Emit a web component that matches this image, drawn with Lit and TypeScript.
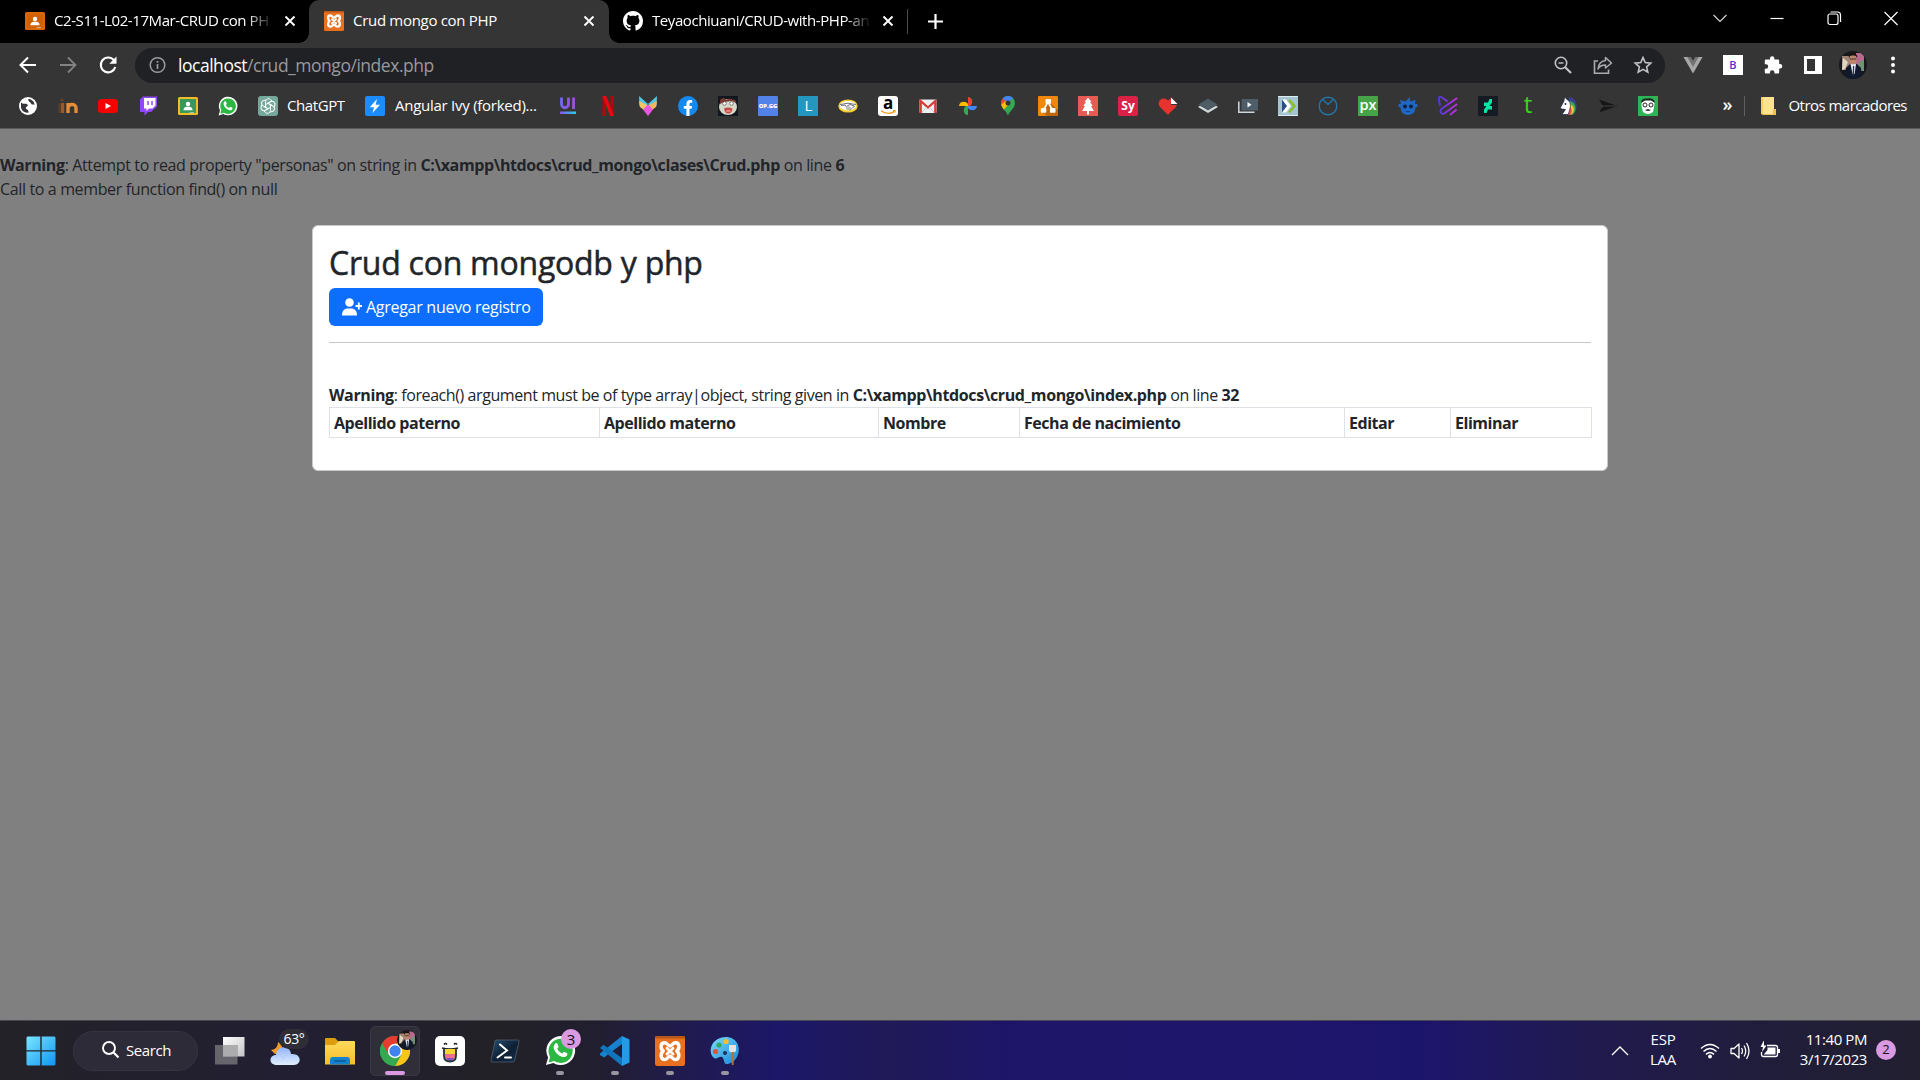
import { LitElement, html, svg, css, TemplateResult, SVGTemplateResult } from "lit";
import { customElement } from "lit/decorators.js";

const icon = (body: SVGTemplateResult, size = 20, box = 20): TemplateResult =>
  html`<svg width=${size} height=${size} viewBox="0 0 ${box} ${box}" fill="none">${body}</svg>`;

/* ---------- shared marks ---------- */
const xamppMark = svg`
  <rect width="20" height="20" rx="1.5" fill="#e9701f"/><rect width="20" height="1.6" rx=".8" fill="#b9581b"/>
  <path d="M6.2 4.5C3.5 4.500 3.500 8.500 5.500 10C3.500 11.500 3.500 15.700 6.500 15.700C8.500 15.700 8.500 13.500 10 13.500C11.500 13.500 11.500 15.700 13.500 15.700C16.500 15.700 16.500 11.500 14.500 10C16.500 8.500 16.500 4.500 13.800 4.500C11.500 4.500 11.700 6.600 10 6.600C8.300 6.600 8.500 4.500 6.200 4.500Z" stroke="#fff" stroke-width="2.300" stroke-linejoin="round"/>
  <path d="M8 8.200L12 12M12 8.200L8 12" stroke="#fff" stroke-width="1.900" stroke-linecap="round"/>`;

const whatsapp = svg`
  <path d="M.6 19.400L2 14.500A9.300 9.300 0 1 1 5.400 18Z" fill="#fff"/>
  <path d="M2.300 17.700L3.300 14.100A7.800 7.800 0 1 1 5.900 16.800Z" fill="#2cb742"/>
  <path d="M6.500 5.600c.5-.5 1.200-.5 1.500.1l.7 1.700c.2.500-.7 1.100-.8 1.500.6 1.400 1.700 2.400 3.100 3 .5 0 .9-1.200 1.400-1.100l1.800.9c.5.300.2 1.200-.2 1.700-.8.900-2 1-3.100.6-2.600-.9-4.500-2.900-5.200-5.200-.3-1.200 0-2.500.8-3.200Z" fill="#fff"/>`;

const portrait = svg`
  <clipPath id="face"><circle cx="14" cy="14" r="14"/></clipPath>
  <g clip-path="url(#face)">
    <rect width="28" height="28" fill="#17181b"/><path d="M3 5H24V19H3Z" fill="#a38372"/>
    <path d="M17 2H25V18H17Z" fill="#b76a8e"/><path d="M4 7L9 11L6 18L3 19Z" fill="#dfd6c4"/>
    <path d="M20 11L25 9V20H18Z" fill="#6f9474"/>
    <path d="M6 28L7 17L11 13H18L22 17L23 28Z" fill="#111a2c"/>
    <path d="M11.500 13H17L15.600 23L13.500 23Z" fill="#e4eaf4"/><path d="M14 15H15.200L15 25H13.600Z" fill="#27324b"/>
    <ellipse cx="14" cy="8.500" rx="3.700" ry="5" fill="#bd856d"/>
    <path d="M9.800 7C9 1 19 .5 18.200 7L16.500 4.500H11.500Z" fill="#17120f"/>
    <path d="M10.700 8H17.300" stroke="#40302b" stroke-width="1.200"/>
  </g>`;

const classroom = (bg: string, edge: string) => svg`
  <rect y="1" width="20" height="18" rx="1.500" fill=${edge}/><rect x="2" y="3" width="16" height="14" fill=${bg}/>
  <circle cx="10" cy="8" r="2.200" fill="#fff"/><path d="M5.500 14.200C5.500 11 8 10.800 10 10.800S14.500 11 14.500 14.200Z" fill="#fff"/>
  <path d="M11.500 16H16V17.200H11.500Z" fill="#ddd" opacity=".6"/>`;

const github = svg`<g transform="scale(1.25)"><path fill="#fff" d="M8 0C3.580 0 0 3.580 0 8c0 3.540 2.290 6.530 5.470 7.590.4.070.55-.17.55-.38 0-.19-.01-.82-.01-1.490-2.010.37-2.530-.49-2.690-.94-.09-.23-.48-.94-.82-1.130-.28-.15-.68-.52-.01-.53.63-.01 1.080.58 1.230.82.72 1.210 1.870.87 2.330.66.070-.52.28-.87.51-1.070-1.780-.2-3.640-.89-3.640-3.950 0-.87.31-1.590.82-2.150-.08-.2-.36-1.020.08-2.120 0 0 .67-.21 2.200.82.64-.18 1.320-.27 2-.27s1.360.09 2 .27c1.530-1.040 2.200-.82 2.200-.82.44 1.100.16 1.920.08 2.120.51.56.82 1.270.82 2.150 0 3.070-1.870 3.750-3.650 3.950.29.25.54.73.54 1.480 0 1.070-.01 1.930-.01 2.200 0 .21.15.46.55.38A8.010 8.010 0 0 0 16 8c0-4.420-3.580-8-8-8"/></g>`;

const closeX = icon(svg`<path d="M1.500 1.500L10.500 10.500M10.500 1.500L1.500 10.500" stroke="#fff" stroke-width="1.900"/>`, 12, 12);

const letter = (t: string, x: number, y: number, size: number, fill: string, weight = 400) =>
  svg`<text x=${x} y=${y} font-family="Open Sans, sans-serif" font-size=${size} font-weight=${weight} fill=${fill} text-anchor="middle">${t}</text>`;

/* ---------- bookmarks ---------- */
type Mark = { art: SVGTemplateResult; label?: string; cls?: string };
const marks: Mark[] = [
  { art: svg`<circle cx="10" cy="10" r="9" fill="#fff"/><path d="M3 6.500C5.500 9 8 6.500 9.500 8.500C11 10.500 7 10.500 8 12.500C8.600 13.700 10.800 13.500 10.500 16.500C7.500 17.500 3.500 15 3 11.500Z" fill="#35363a"/><path d="M10.500 3C9.500 5 12 5.500 13 7.500C14 9.500 16 8 16.600 9C16.300 5.500 13.500 3 10.500 3Z" fill="#35363a"/>` },
  { art: svg`<path d="M4.500 7V17" stroke="#9a5a28" stroke-width="3.400"/><path d="M1.500 7V17" stroke="#55412f" stroke-width="2"/><circle cx="4" cy="4" r="1.500" fill="#6b4628"/><path d="M10 17V7M10 12C10 7.500 18 7 18 12V17" stroke="#e58a35" stroke-width="3.400"/>` },
  { art: svg`<rect y="3" width="20" height="14" rx="3.500" fill="#f60000"/><path d="M7.500 7L13 10L7.500 13Z" fill="#fff"/>` },
  { art: svg`<path d="M2 3.500L5 .5H19V10.500L13 16H10L6.500 19.500V16H2Z" fill="#9146ff"/><path d="M6 2H17.500V9.500L14.500 12.500H11L8.500 15V12.500H6Z" fill="#fff"/><path d="M10 5V9M14 5V9" stroke="#9146ff" stroke-width="1.500"/>` },
  { art: classroom("#39985c", "#f2bd26") },
  { art: whatsapp },
  { label: "ChatGPT", cls: "chat", art: svg`<rect width="20" height="20" rx="3" fill="#75a99c"/><g stroke="#fff" stroke-width="1">${[0, 60, 120, 180, 240, 300].map(a => svg`<path transform="rotate(${a} 10 10)" d="M7.600 8.700V5.200A2.900 2.900 0 0 1 12.700 3.700L14 5M7.600 8.700L11.600 6.300"/>`)}</g>` },
  { label: "Angular Ivy (forked)...", cls: "ivy", art: svg`<rect width="20" height="20" rx="2" fill="#1b8cfb"/><path d="M12 3L4.800 11.300H9L7.500 17L15 8.700H10.700Z" fill="#fff"/>` },
  { art: svg`<defs><linearGradient id="ui" gradientUnits="userSpaceOnUse" x1="2" y1="0" x2="12" y2="0"><stop stop-color="#6d6af5"/><stop offset="1" stop-color="#9353e8"/></linearGradient><linearGradient id="ub"><stop stop-color="#8555ee"/><stop offset="1" stop-color="#25d0e8"/></linearGradient></defs><path d="M3.500 1.500V8C3.500 13 10.500 13 10.500 8V1.500" stroke="url(#ui)" stroke-width="2.800"/><path d="M14.200 1.500H16.900V13H14.200Z" fill="#a253e6"/><path d="M2 15.500H18V18H2Z" fill="url(#ub)"/>` },
  { art: svg`<path d="M4.500 0H8V20H4.500ZM12.500 0H16V20H12.500Z" fill="#b1060f"/><path d="M4.500 0H8.300L16 20H12.200Z" fill="#e50914"/>` },
  { art: svg`<path d="M1 0L10 8L5.500 13L1.500 10Z" fill="#53c8e0"/><path d="M19 0L10 8L14.500 13L18.500 10Z" fill="#53c8e0"/><path d="M1 5L10 9.500L6.500 14.500L2 11Z" fill="#f4c568"/><path d="M19 5L10 9.500L13.500 14.500L18 11Z" fill="#f4b65a"/><path d="M10 8.500L15 13.500L10 20L5 13.500Z" fill="#e957e0"/>` },
  { art: svg`<circle cx="10" cy="10" r="10" fill="#1389f2"/><path d="M8.400 20V12.800H5.800V10H8.400V7.800C8.400 4.700 10.500 3.600 14.200 4.300V6.800C12 6.500 11.500 7 11.500 8.300V10H14.100L13.600 12.800H11.500V20Z" fill="#fff"/>` },
  { art: svg`<rect width="20" height="20" fill="#10171e"/><ellipse cx="10" cy="11" rx="9" ry="8" fill="#d6d8c8"/><path d="M2 4Q6 0 8 4Q12 1 14 4Q18 2 18 7L14 5L6 6L2 8Z" fill="#7a3a34"/><circle cx="6.500" cy="7.500" r="1.800" fill="#fff" stroke="#555" stroke-width=".7"/><circle cx="13.500" cy="7.500" r="1.800" fill="#fff" stroke="#555" stroke-width=".7"/><path d="M6 12.500Q10 10.500 14.500 12.500Q14 17.500 10 17.500Q7 17.500 6 12.500Z" fill="#c04a4a"/><path d="M8 14.500Q10 13 13 14.500L12 16H8Z" fill="#f08078"/>` },
  { art: svg`<rect width="20" height="20" rx="1" fill="#5383e8"/>${letter("OP.GG", 10, 12.300, 5.800, "#fff", 800)}` },
  { art: svg`<rect width="20" height="20" fill="#2596be"/>${letter("L", 10.500, 15.300, 15, "#fff")}` },
  { art: svg`<ellipse cx="10" cy="10" rx="9.700" ry="6.600" fill="#f2cf2c"/><ellipse cx="10" cy="9.700" rx="8.300" ry="4.700" fill="#fff"/><path d="M2 8.500Q6 8 8 7.500T12 7.500T18 8.500M3 9.500L7 9L11 14L14 12.500L16.500 10L12 8.500L9 10" stroke="#5b5b66" stroke-width=".9"/><path d="M8 13L10 14.500L14 12.500L11 10L8 11Z" fill="#bbb"/>` },
  { art: svg`<rect width="20" height="20" rx="3" fill="#fff"/>${letter("a", 10.200, 13.300, 17, "#000", 700)}<path d="M3 14.800Q10 19.700 16.500 15.300" stroke="#f59b1e" stroke-width="1.400"/><path d="M15 14.500H17.400L16.800 16.700" stroke="#f59b1e"/>` },
  { art: svg`<rect x="1.500" y="3.500" width="17" height="13.500" rx="1" fill="#eceff1"/><path d="M2.700 17V5L10 11.500L17.300 5V17" stroke="#d63c35" stroke-width="2.300"/><path d="M4 16L9 11M16 16L11 11" stroke="#ccc"/>` },
  { art: svg`<path d="M10 10V1C15 1 15.500 8 12 10Z" fill="#ea4335"/><path d="M10 10H19C19 15 12 15.500 10 12Z" fill="#4285f4"/><path d="M10 10V19C5 19 4.500 12 8 10Z" fill="#34a853"/><path d="M10 10H1C1 5 8 4.500 10 8Z" fill="#fbbc04"/>` },
  { art: svg`<path d="M10 20C9.500 15.500 3 13 3 7A7 7 0 0 1 17 7C17 13 10.500 15.500 10 20Z" fill="#34a853"/><path d="M4.700 11.500L15 1.900A7 7 0 0 0 4.700 2.500Z" fill="#4285f4"/><path d="M4.600 2.500A7 7 0 0 0 3.500 9.600L7.500 5Z" fill="#ea4335"/><path d="M3.300 8.500C3.500 10 4.600 12 6 13.600L12.500 6L7.500 5Z" fill="#fbbc04"/><circle cx="10" cy="7" r="2.500" fill="#35363a"/>` },
  { art: svg`<rect width="20" height="20" rx="1" fill="#f08705"/><path d="M11 6L20 14V20H9L3 15Z" fill="#bb6810"/><path d="M10 6L5.500 14M10 6L14.500 14" stroke="#fff" stroke-width="1.600"/><rect x="7.500" y="3" width="5.500" height="4.700" rx=".7" fill="#fff"/><rect x="2.800" y="12" width="5.500" height="4.700" rx=".7" fill="#fff"/><rect x="12" y="12" width="5.500" height="4.700" rx=".7" fill="#fff"/>` },
  { art: svg`<rect width="20" height="20" fill="#e65c55"/><path d="M10 1.500L13.500 6H12L14.700 10H13L16 15H11V18.500H9V15H4L7 10H5.300L8 6H6.500Z" fill="#fff"/>` },
  { art: svg`<rect width="20" height="20" rx="2.500" fill="#dc2147"/>${letter("Sy", 10, 14, 12, "#fff", 700)}` },
  { art: svg`<path d="M10 19L2 11C-2 6 4-1 10 4.500L13 2V9H19C18 12 14 14 10 19Z" fill="#e5332d"/><path d="M13 1.500L19.500 8H13Z" fill="#fff"/>` },
  { art: svg`<path d="M0 11L10 17L20 11L18 9.800L10 13.500L2 9.800Z" fill="#d3dadc"/><path d="M10 2.500L19.500 8.500L10 14.500L.5 8.500Z" fill="#4e5c66"/>` },
  { art: svg`<path d="M.8 5.500V16.200H16.500" stroke="#cfd8dc" stroke-width="1.500"/><rect x="3.500" y="3" width="16.500" height="11.500" fill="#4d5d69"/><path d="M9.500 6L13.500 8.700L9.500 11.500Z" fill="#fff"/>` },
  { art: svg`<rect width="20" height="20" fill="#a5c4d3"/><path d="M0 .5H20M0 19.500H20" stroke="#dceaf2"/><path d="M4 3.500L10.500 10L4 16.500Z" fill="#2b4d8a"/><path d="M4 3.500H8L13 10L8 16.500H4L9 10Z" fill="#fff"/><path d="M11 4L16.500 10L11 16.500" stroke="#8cbd2f" stroke-width="2.600"/>` },
  { art: svg`<circle cx="10" cy="10" r="8.800" stroke="#2475a8" stroke-width="1.400"/><path d="M4.500 3.200L10 8.500L15.500 3.200" stroke="#2475a8" stroke-width="1.400"/>` },
  { art: svg`<rect width="20" height="20" fill="#47a347"/>${letter("px", 10, 14, 14.500, "#fff", 600)}` },
  { art: svg`<path d="M2 4L7.500 5.500L12 1L12 5.500L17.500 4L17 8H19.500V11H17.500C17.500 16 14.500 19 10 19S2.500 16 2.500 11H.5V8H3Z" fill="#1e68c4"/><circle cx="7" cy="10.500" r="2" fill="#10233e"/><circle cx="13" cy="10.500" r="2" fill="#10233e"/><path d="M7.500 15.500H12.500" stroke="#134a92"/>` },
  { art: svg`<defs><linearGradient id="flow" gradientUnits="userSpaceOnUse" x1="0" y1="0" x2="20" y2="0"><stop stop-color="#453bdc"/><stop offset="1" stop-color="#d02be2"/></linearGradient></defs><path d="M9 5L4 1.500C1-.3 .5 2 1 4.500L2 9M18.500 2.500L4 12.500C1 15 3.500 20 7 17L18.500 8.500M12.500 18.500L18 14" stroke="url(#flow)" stroke-width="1.900" stroke-linecap="round"/>` },
  { art: svg`<rect width="20" height="20" rx="1" fill="#151b22"/><path d="M14 3V6.500L11.500 10H14V13.500H10L8.500 17H6V13.500L8.500 10H6V6.500H10L11.500 3Z" fill="#05e6a2"/>` },
  { art: svg`${letter("t", 10, 17, 24, "#39d51a", 400)}` },
  { art: svg`<path d="M11 1C20 1 21 15 15 18.500L10 12Z" fill="#3b3f8f"/><path d="M12 5C19 7 19 16 14 19L10 14Z" fill="#3fae4f"/><path d="M12 8C17 10 17 16 13 19L10 14Z" fill="#f5c735"/><path d="M11 11C15 12 14 18 12 19L7 18Z" fill="#e05a4d"/><path d="M4 18.500L7.500 13.500C5 13 3 13.500 2.500 11.500L6 5L6.500 1L9.500 4C14 6 12.500 13 10 18.500Z" fill="#fff" stroke="#18224a" stroke-width=".7"/><circle cx="7.500" cy="8" r=".9" fill="#18224a"/>` },
  { art: svg`<path d="M1 3.500L19.500 10L1 16.500L5 10.500Z" fill="#171717"/><path d="M3 10H18" stroke="#4c4c4c" stroke-width=".8"/>` },
  { art: svg`<rect width="20" height="20" fill="#2cb457"/><path d="M3.500 6Q4 3 8 4H13Q16.500 4 16.500 8L15 16Q10 20 5 16L3.500 10Z" fill="#fff"/><path d="M3 7Q3 2 9 2.500Q16 1.500 17 7L13 4.500H7Z" fill="#17231b"/><circle cx="7" cy="9" r="2" stroke="#111" stroke-width=".9"/><circle cx="13" cy="9" r="2" stroke="#111" stroke-width=".9"/><path d="M7 14Q10 16 13 14L10 13Z" fill="#333"/>` },
];

/* ---------- taskbar applications ---------- */
type App = { art: TemplateResult; run?: boolean; active?: boolean; badge?: string };
const apps: App[] = [
  { art: icon(svg`<defs><linearGradient id="tv" x1="0" y1="0" x2="1" y2="1"><stop stop-color="#fff"/><stop offset="1" stop-color="#c4c4c6"/></linearGradient></defs><path d="M8 1H29.500V20.500H8Z" fill="url(#tv)"/><path d="M0 9H22.500V28.500H0Z" fill="#77777a" opacity=".8"/><path d="M8 9H22.500V20.500H8Z" fill="#acacae"/>`, 30, 30) },
  { art: icon(svg`<defs><linearGradient id="cl" x1="0" y1="0" x2="0" y2="1"><stop stop-color="#92b5f7"/><stop offset="1" stop-color="#e2eefe"/></linearGradient></defs><path d="M1 14Q8 13 8 6Q14 10 12 17L5 18Z" fill="#f29a2e"/><path d="M7 29C-2 29-1 19 6 19C7 9 20 9 21 18C32 17 32 29 24 29Z" fill="url(#cl)"/><path d="M6 20C10 18 13 21 14 23" stroke="#b5cefb" stroke-width="1.500"/>`, 30, 30), badge: "63°" },
  { art: icon(svg`<defs><linearGradient id="fo" x1="0" y1="0" x2="0" y2="1"><stop stop-color="#ffda5c"/><stop offset="1" stop-color="#f6bd28"/></linearGradient></defs><path d="M0 3Q0 2 1 2H10L14 6H30V14H0Z" fill="#dc9e0e"/><path d="M0 9H10L14 5H29Q30 5 30 6V28.500H0Z" fill="url(#fo)"/><path d="M5 28.500V24Q5 21 8 21H22Q25 21 25 24V28.500Z" fill="#1683cf"/><path d="M9 25H21" stroke="#0a568f" stroke-width="1.400"/>`, 30, 30) },
  { active: true, art: icon(svg`<circle cx="15" cy="15" r="15" fill="#35a852"/><path d="M15 15L2 7.500A15 15 0 0 1 28 7.500H15Z" fill="#e53c31"/><path d="M15 7.500H28A15 15 0 0 1 15 30L21.500 18.500Z" fill="#fbc516"/><path d="M2 7.500L9 19L15 15L15 7.500Z" fill="#e53c31"/><path d="M2 7.500L8.800 19H21L15 30A15 15 0 0 1 2 7.500Z" fill="#35a852"/><circle cx="15" cy="15" r="7.200" fill="#fff"/><circle cx="15" cy="15" r="5.700" fill="#3e83f0"/>`, 30, 30) },
  { art: icon(svg`<rect width="30" height="30" rx="5" fill="#fff"/><path d="M9 8.500Q10.500 6.500 12 8.500M19 8.500Q20.500 6.500 22 8.500" stroke="#222" stroke-width="1.500"/><path d="M7 12Q15 14 23 12" stroke="#222" stroke-width="1.600"/><path d="M9 13H21V20Q21 25 15 25T9 20Z" fill="#f7d32e"/><path d="M9.400 18H20.600V21Q19 25 15 25T9.400 21Z" fill="#ef6e86"/><path d="M11 22H19Q17 25 15 25T11 22Z" fill="#7c4dcc"/><path d="M9 13V20Q9 25.500 15 25.500T21 20V13" stroke="#17383f" stroke-width="1.800"/>`, 30, 30) },
  { art: icon(svg`<defs><linearGradient id="ps" x1="0" y1="0" x2="1" y2="1"><stop stop-color="#254e74"/><stop offset=".55" stop-color="#0e1f33"/><stop offset="1" stop-color="#16304d"/></linearGradient></defs><path d="M5.500 4H28Q29.500 4 29 5.500L24.500 25Q24 26 23 26H2Q.5 26 1 24.500L5 5Z" fill="url(#ps)" stroke="#5a6575" stroke-width=".7"/><path d="M10 8.500L17 14.500L7.500 21.500M15 21.500H21" stroke="#fff" stroke-width="2" stroke-linecap="round"/>`, 30, 30) },
  { art: icon(whatsapp, 31), run: true, badge: "3" },
  { art: icon(svg`<path d="M22 0V8L4 21.500L0 19V17.500Z" fill="#1484cf"/><path d="M0 12L3.500 8.700L22 22V30Z" fill="#1075bd"/><path d="M22 0L29.500 3.500V26.500L22 30Z" fill="#249be7"/>`, 30, 30), run: true },
  { art: icon(xamppMark, 30), run: true },
  { art: icon(svg`<defs><linearGradient id="pa" x1="0" y1="0" x2="1" y2="1"><stop stop-color="#79dcfb"/><stop offset="1" stop-color="#1a86d6"/></linearGradient></defs><path d="M2 9C7-1 24-2 28 9C31 18 25 27 18 28C13 29 15 23 12 21C9 20 7 24 4 22C0 19 0 13 2 9Z" fill="url(#pa)"/><circle cx="9" cy="9" r="2.600" fill="#2fa866"/><circle cx="16" cy="5.500" r="2.600" fill="#f3c127"/><circle cx="5.500" cy="15.500" r="2.600" fill="#da573b"/><circle cx="15" cy="17" r="2" fill="#1a3156"/><path d="M19 9H26V15L23.500 17H21.500L19 15Z" fill="#e6e3dd"/><path d="M21.300 16H24L23.500 29H21.800Z" fill="#b77333"/>`, 30, 30), run: true },
];

@customElement("app-root")
export class AppRoot extends LitElement {
  static styles = css`
    :host { display: flex; flex-direction: column; width: 1920px; height: 1080px; overflow: hidden; background: #808080; font-family: "Open Sans", "Noto Sans", sans-serif; }
    * { box-sizing: border-box; }
    svg { display: block; flex: none; }
    .tabs { height: 43px; background: #000; display: flex; color: #fff; font-size: 15px; line-height: 20px; }
    .tab { display: flex; align-items: center; height: 43px; padding-bottom: 2px; }
    .tab.one { width: 309px; padding-left: 25px; }
    .tab.two { width: 300px; padding-left: 15px; background: #353535; border-radius: 10px 10px 0 0; position: relative; }
    .tab.two::before, .tab.two::after { content: ""; position: absolute; bottom: 0; width: 10px; height: 10px; }
    .tab.two::before { left: -10px; background: radial-gradient(circle at 0 0, transparent 9.500px, #353535 10px); }
    .tab.two::after { right: -10px; background: radial-gradient(circle at 100% 0, transparent 9.500px, #353535 10px); }
    .tab.three { width: 299px; padding-left: 14px; }
    .title { white-space: nowrap; overflow: hidden; margin: 0 11px 2px 9px; letter-spacing: -.42px; width: 219px; }
    .title.fade { mask-image: linear-gradient(90deg, #000 88%, transparent 100%); }
    .two .title { width: 230px; margin-right: 0; letter-spacing: -.3px; }
    .split { width: 1px; height: 25px; background: #4c4c4c; margin: 9px 20px 0 -1px; }
    .plus { margin-top: 14px; }
    .window { margin-left: auto; display: flex; gap: 37px; padding: 8px 19px 0 0; }
    .toolbar { height: 45px; background: #353535; display: flex; align-items: center; padding-left: 18px; padding-bottom: 1px; }
    .nav { display: flex; gap: 20px; width: 117px; }
    .address { width: 1530px; height: 35px; border-radius: 18px; background: #202124; display: flex; align-items: center; padding: 0 12px 0 13px; }
    .url { margin-left: 10px; font-size: 17.500px; letter-spacing: -.47px; color: #999a9c; flex: 1; line-height: 24px; }
    .url b { color: #fff; font-weight: 400; }
    .actions { display: flex; gap: 20px; }
    .ext { display: flex; gap: 20px; margin-left: 18px; }
    .ext .me { margin: -4px; }
    .marks { height: 41px; background: #353535; border-bottom: 1px solid #5b5b5b; display: flex; align-items: center; gap: 20px; padding: 0 13px 5px 18px; color: #fff; font-size: 15px; line-height: 20px; }
    .mark { display: flex; align-items: center; gap: 10px; white-space: nowrap; }
    .mark span { margin-top: -2px; }
    .chat { gap: 9px; }
    .chat span { width: 58px; letter-spacing: -.4px; }
    .ivy span { width: 143px; letter-spacing: -.26px; }
    .more { margin-left: auto; font-size: 18px; font-weight: 600; margin: -3px -8px 0 auto; }
    .rule { width: 1px; height: 20px; background: #606060; }
    .other { margin-left: -7px; letter-spacing: -.53px; }
    .page { flex: 1; padding-top: 24px; color: #212529; font-size: 16px; line-height: 24px; }
    .warn { letter-spacing: -.36px; white-space: nowrap; }
    .warn b { letter-spacing: -.39px; }
    .card { width: 1296px; height: 246px; margin: 24px auto 0; background: #fff; border: 1px solid #c8c8c8; border-radius: 6px; padding: 16px; }
    .card .warn { letter-spacing: -.42px; }
    .card .warn b { letter-spacing: -.37px; }
    h2 { margin: 0 0 6px; padding-top: 2px; font-size: 32px; line-height: 38.400px; font-weight: 500; letter-spacing: -.24px; -webkit-text-stroke: .5px #212529; }
    .btn { display: flex; align-items: center; width: 214px; height: 38px; border: 0; border-radius: 6px; background: #0d6efd; color: #fff; font: inherit; letter-spacing: -.28px; padding: 0 0 0 13px; gap: 4px; white-space: nowrap; }
    hr { margin: 16px 0 40px; border: 0; border-top: 1px solid #c4c5c6; height: 1px; }
    table { width: 1262px; border-collapse: collapse; table-layout: fixed; }
    th { border: 1px solid #dee2e6; padding: 3px 4px 2px; text-align: left; height: 30px; line-height: 24px; letter-spacing: -.46px; }
    .taskbar { height: 60px; border-top: 1px solid #484850; display: flex; align-items: center; padding-left: 16px; color: #fff; font-size: 15px;
      background: linear-gradient(90deg, #232228 0, #221f33 300px, #222126 500px, #211e30 600px, #201b50 690px, #1c1768 780px, #201a58 890px, #1d1668 1000px, #1c156c 1420px, #201a50 1580px, #201d3c 1750px, #211f2f 100%); }
    .start { width: 50px; display: flex; justify-content: center; }
    .search { width: 125px; height: 40px; margin: 0 7px; border-radius: 20px; background: #2e2b39; border: 1px solid #373441; display: flex; align-items: center; padding-left: 27px; padding-bottom: 2px; gap: 5px; }
    .search span { letter-spacing: -.4px; }
    .apps { display: flex; gap: 5px; }
    .app { width: 50px; height: 50px; display: flex; align-items: center; justify-content: center; border-radius: 5px; position: relative; }
    .app.active { background: #302e39; border: 1px solid #3b3944; }
    .app i { position: absolute; bottom: 1px; left: 21px; width: 8px; height: 4px; border-radius: 2px; background: #98959f; }
    .app.active i { left: 14px; bottom: 0; width: 20px; background: #d99ae2; }
    .app .count { position: absolute; left: 26px; top: 3px; width: 20px; height: 20px; border-radius: 10px; background: #d99ae2; color: #111; text-align: center; line-height: 20px; }
    .app .temp { position: absolute; left: 19px; top: 3px; width: 30px; height: 20px; border-radius: 10px; background: #302e35; text-align: center; line-height: 20px; font-size: 14px; letter-spacing: -.3px; }
    .app .user { position: absolute; left: 26px; top: 3px; }
    .tray { margin-left: auto; display: flex; align-items: center; padding-right: 24px; line-height: 19.500px; }
    .lang { width: 40px; margin: -2px 17px 0 13px; text-align: center; letter-spacing: -.2px; }
    .status { display: flex; gap: 10px; }
    .clock { width: 87px; margin-top: -2px; text-align: right; letter-spacing: -.42px; white-space: nowrap; }
    .note { width: 20px; height: 20px; border-radius: 10px; background: #d99ae2; color: #111; text-align: center; margin-left: 9px; font-size: 13px; line-height: 19px; margin-top: -1px; }
  `;

  render() {
    return html`
      <div class="tabs">
        <div class="tab one">${icon(classroom("#cf6208", "#d96806"))}<span class="title fade">C2-S11-L02-17Mar-CRUD con PH</span>${closeX}</div>
        <div class="tab two">${icon(xamppMark)}<span class="title">Crud mongo con PHP</span>${closeX}</div>
        <div class="tab three">${icon(github)}<span class="title fade">Teyaochiuani/CRUD-with-PHP-an</span>${closeX}</div>
        <div class="split"></div>
        <div class="plus">${icon(svg`<path d="M7.500 0V15M0 7.500H15" stroke="#fff" stroke-width="2.200"/>`, 15, 15)}</div>
        <div class="window">
          ${icon(svg`<path d="M3.500 7L10 13.500L16.500 7" stroke="#ddd" stroke-width="1.100"/>`)}
          ${icon(svg`<path d="M3.500 10.500H16.500" stroke="#fff" stroke-width="1.200"/>`)}
          ${icon(svg`<rect x="4" y="6" width="10" height="10.500" rx="2" stroke="#fff" stroke-width="1.200"/><path d="M6.500 4H13.500Q16.500 4 16.500 7V14" stroke="#fff" stroke-width="1.200"/>`)}
          ${icon(svg`<path d="M3.500 4L16.500 17M16.500 4L3.500 17" stroke="#fff" stroke-width="1.200"/>`)}
        </div>
      </div>
      <div class="toolbar">
        <div class="nav">
          ${icon(svg`<path d="M18 10H3M10 2.500L2.500 10L10 17.500" stroke="#fff" stroke-width="2"/>`)}
          ${icon(svg`<path d="M2 10H17M10 2.500L17.500 10L10 17.500" stroke="#838383" stroke-width="1.800"/>`)}
          ${icon(svg`<path d="M15.900 5.200A7.400 7.400 0 1 0 17.300 12" stroke="#fff" stroke-width="2.100"/><path d="M18.500 1.500V8.700H11.300Z" fill="#fff"/>`)}
        </div>
        <div class="address">
          ${icon(svg`<circle cx="9.500" cy="10" r="7.300" stroke="#9a9b9d" stroke-width="1.500"/><path d="M9.500 9V14M9.500 6V7.700" stroke="#9a9b9d" stroke-width="1.700"/>`)}
          <span class="url"><b>localhost</b>/crud_mongo/index.php</span>
          <div class="actions">
            ${icon(svg`<circle cx="8" cy="8" r="5.700" stroke="#c2c3c5" stroke-width="1.600"/><path d="M12.200 12.200L18 18" stroke="#c2c3c5" stroke-width="2.200"/><path d="M5.500 8H10.500" stroke="#c2c3c5" stroke-width="1.400"/>`)}
            ${icon(svg`<path d="M5 6H1.500V18.300H15.500V14.500" stroke="#aaabad" stroke-width="1.600"/><path d="M12.500 2.500L18.500 8L12.500 13V10C9 10 6.500 11 5 14C5.500 9 8 6 12.500 5.500Z" stroke="#aaabad" stroke-width="1.500" stroke-linejoin="round"/>`)}
            ${icon(svg`<path d="M10 2.500L12.200 7.600L17.800 8.100L13.600 11.800L14.800 17.200L10 14.400L5.200 17.200L6.400 11.800L2.200 8.100L7.800 7.600Z" stroke="#c2c3c5" stroke-width="1.600"/>`)}
          </div>
        </div>
        <div class="ext">
          ${icon(svg`<path d="M.5 2H6L10 9L14 2H19.500L10 18.500Z" fill="#a8a8a8"/><path d="M4.300 2H8L10 5.500L12 2H15.700L10 12Z" fill="#737373"/><path d="M8 2L10 5.500L12 2Z" fill="#353535"/>`)}
          ${icon(svg`<rect width="20" height="20" fill="#fff"/>${letter("B", 10, 14, 11, "#4b32c3", 600)}`)}
          ${icon(svg`<path d="M7 3.500A2.200 2.200 0 0 1 11.400 3.500V4.500H15Q16.200 4.500 16.200 5.700V9H17A2.300 2.300 0 0 1 17 13.600H16.200V17.300Q16.200 18.500 15 18.500H11.500V17.500A2.300 2.300 0 0 0 6.900 17.500V18.500H3Q1.800 18.500 1.800 17.300V13.700H3A2.200 2.200 0 0 0 3 9.300H1.800V5.700Q1.800 4.500 3 4.500H7Z" fill="#fff"/>`)}
          ${icon(svg`<path d="M1 1H19V19H1Z" fill="#fff"/><path d="M4 4H12V16H4Z" fill="#353535"/>`)}
          <div class="me">${icon(portrait, 28, 28)}</div>
          ${icon(svg`<circle cx="10" cy="3.500" r="2" fill="#fff"/><circle cx="10" cy="10" r="2" fill="#fff"/><circle cx="10" cy="16.500" r="2" fill="#fff"/>`)}
        </div>
      </div>
      <div class="marks">
        ${marks.map(m => html`<div class="mark ${m.cls ?? ""}">${icon(m.art)}${m.label ? html`<span>${m.label}</span>` : ""}</div>`)}
        <span class="more">»</span><div class="rule"></div>
        <div class="mark other">${icon(svg`<path d="M3 1H16V13L18 15V18H3Z" fill="#fde293"/><path d="M3 1H5V18H3Z" fill="#f5ce5b"/><path d="M15 13H18V19H5L3 18H15Z" fill="#ecc24c"/>`)}<span>Otros marcadores</span></div>
      </div>
      <main class="page">
        <div class="warn"><b>Warning</b>: Attempt to read property "personas" on string in <b>C:\\xampp\\htdocs\\crud_mongo\\clases\\Crud.php</b> on line <b>6</b></div>
        <div class="warn">Call to a member function find() on null</div>
        <section class="card">
          <h2>Crud con mongodb y php</h2>
          <button class="btn">${icon(svg`<circle cx="7.500" cy="5.500" r="4.300" fill="#fff"/><path d="M0 18.500C0 13.500 2.500 11.500 5.500 11.500H9.500C12.500 11.500 15 13.500 15 18.500Z" fill="#fff"/><path d="M16.800 5.500V12.500M13.500 9H20" stroke="#fff" stroke-width="1.800"/>`, 20)}<span>Agregar nuevo registro</span></button>
          <hr>
          <div class="warn"><b>Warning</b>: foreach() argument must be of type array|object, string given in <b>C:\\xampp\\htdocs\\crud_mongo\\index.php</b> on line <b>32</b></div>
          <table>
            <colgroup><col width="270"><col width="279"><col width="141"><col width="325"><col width="106"><col width="141"></colgroup>
            <tr><th>Apellido paterno</th><th>Apellido materno</th><th>Nombre</th><th>Fecha de nacimiento</th><th>Editar</th><th>Eliminar</th></tr>
          </table>
        </section>
      </main>
      <footer class="taskbar">
        <div class="start">${icon(svg`<defs><linearGradient id="win" gradientUnits="userSpaceOnUse" x1="0" y1="0" x2="30" y2="30"><stop stop-color="#7be8ff"/><stop offset="1" stop-color="#0f93f5"/></linearGradient></defs><path d="M1.500 .5H14.300V14.200H.5V1.500ZM15.700 .5H28.500L29.500 1.500V14.200H15.700ZM.5 15.600H14.300V29.500H1.500L.5 28.500ZM15.700 15.600H29.500V28.500L28.500 29.500H15.700Z" fill="url(#win)"/>`, 30, 30)}</div>
        <div class="search">${icon(svg`<circle cx="8" cy="8" r="6" stroke="#fff" stroke-width="1.900"/><path d="M12.300 12.300L17.500 17.500" stroke="#fff" stroke-width="2.200"/>`)}<span>Search</span></div>
        <div class="apps">
          ${apps.map(a => html`<div class="app ${a.active ? "active" : ""}">${a.art}
            ${a.badge ? html`<span class=${a.run ? "count" : "temp"}>${a.badge}</span>` : ""}
            ${a.active ? html`<span class="user">${icon(portrait, 20, 28)}</span>` : ""}
            ${a.run || a.active ? html`<i></i>` : ""}</div>`)}
        </div>
        <div class="tray">
          ${icon(svg`<path d="M2 14L10 6L18 14" stroke="#fff" stroke-width="1.300"/>`)}
          <div class="lang">ESP<br>LAA</div>
          <div class="status">
            ${icon(svg`<path d="M1 7.500Q10-.5 19 7.500M3.500 10.500Q10 4.500 16.500 10.500M6 13.400Q10 9.500 14 13.400" stroke="#fff" stroke-width="1.500"/><circle cx="10" cy="15.500" r="1.900" fill="#fff"/>`)}
            ${icon(svg`<path d="M1 7.500H4L9 3V17L4 12.500H1Z" stroke="#fff" stroke-width="1.300" stroke-linejoin="round"/><path d="M11.500 7Q13.500 10 11.500 13M14 4.500Q17.500 10 14 15.500M16.500 2Q21.500 10 16.500 18" stroke="#fff" stroke-width="1.300"/>`)}
            ${icon(svg`<path d="M7 4.500H15.500Q17.500 4.500 17.500 6.500V13.500Q17.500 15.500 15.500 15.500H3.500Q1.500 15.500 1.500 13.500V11" stroke="#fff" stroke-width="1.300"/><path d="M7.500 6.500H15.500V13.500H3.800L7.500 9Z" fill="#fff"/><path d="M18 8H20V12H18Z" fill="#fff"/><path d="M4-1L.5 6H3L2 11L6.500 4.500H4Z" fill="#fff"/>`)}
          </div>
          <div class="clock">11:40 PM<br>3/17/2023</div>
          <div class="note">2</div>
        </div>
      </footer>`;
  }
}
